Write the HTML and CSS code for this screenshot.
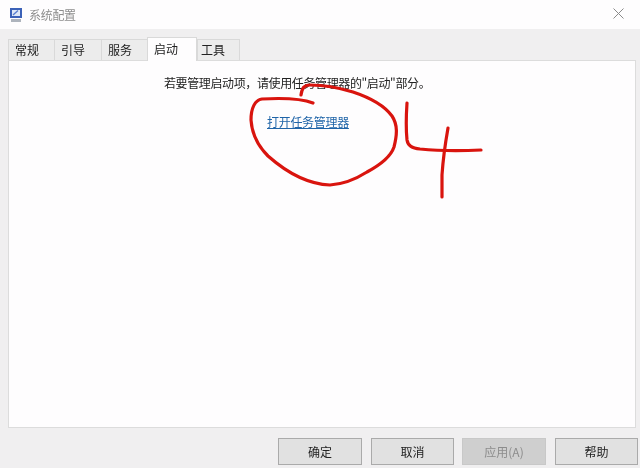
FILE: index.html
```html
<!DOCTYPE html>
<html lang="zh">
<head>
<meta charset="utf-8">
<title>系统配置</title>
<link rel="stylesheet" href="styles.css">
</head>
<body>
<div class="window">
  <header class="titlebar">
    <svg class="app-icon" width="14" height="16" viewBox="0 0 14 16">
      <rect x="1" y="1" width="12" height="10" fill="#3c62b8"/>
      <rect x="3" y="3" width="8" height="6" fill="#dfe8f6"/>
      <path d="M4 8 L9 3.5" stroke="#5a7fd0" stroke-width="1.4"/>
      <rect x="2" y="12" width="10" height="3" fill="#aeb4bd"/>
    </svg>
    <span class="title">系统配置</span>
    <svg class="close" width="11" height="11" viewBox="0 0 11 11">
      <path d="M0.5 0.5 L10.5 10.5 M10.5 0.5 L0.5 10.5" stroke="#8a8a8a" stroke-width="1"/>
    </svg>
  </header>
  <main class="content">
    <nav class="tabs">
      <span class="tab tab-a">常规</span>
      <span class="tab tab-b">引导</span>
      <span class="tab tab-c">服务</span>
      <span class="tab tab-active">启动</span>
      <span class="tab tab-e">工具</span>
    </nav>
    <section class="panel">
      <p class="message">若要管理启动项，请使用任务管理器的"启动"部分。</p>
      <a class="link" href="#">打开任务管理器</a>
    </section>
    <footer class="actions">
      <button class="btn">确定</button>
      <button class="btn btn-narrow">取消</button>
      <button class="btn btn-disabled">应用(A)</button>
      <button class="btn btn-narrow">帮助</button>
    </footer>
  </main>
  <svg class="scribble" width="640" height="468" viewBox="0 0 640 468">
    <path d="M313 103 C300 98 280 98 262 99 C255 100 251 108 251 120 C252 135 258 146 268 156 C285 171 305 184 330 185 C345 184 356 179 367 172 C380 165 391 156 394 147 C397 135 398 125 392 116 C384 105 368 97 353 92 C340 88 325 85 310 85 C304 85 302 88 301 95"/>
    <path d="M407 103 C406 118 406 130 407 140 C408 146 412 148 420 149 C440 151 460 151 481 150"/>
    <path d="M448 128 C445 145 443 160 442 175 C442 183 442 190 442 197"/>
  </svg>
</div>
</body>
</html>
```
FILE: styles.css
```css
html, body {
  margin: 0;
  padding: 0;
}
body {
  width: 640px;
  height: 468px;
  overflow: hidden;
  font-family: "Noto Sans CJK SC", "Liberation Sans", sans-serif;
  font-size: 12px;
  color: #222;
}
.window {
  position: relative;
  width: 640px;
  height: 468px;
  display: flex;
  flex-direction: column;
  background: #f0eff0;
}
.titlebar {
  height: 29px;
  flex: none;
  display: flex;
  align-items: center;
  padding: 0 16px 0 9px;
  background: #fefdfe;
  box-sizing: border-box;
}
.app-icon {
  margin-right: 6px;
}
.title {
  color: #8e8e8e;
  flex: 1;
  letter-spacing: -0.3px;
  filter: blur(0.4px);
}
.close {
  flex: none;
  margin-top: -2px;
}
.content {
  flex: 1;
  display: flex;
  flex-direction: column;
  padding: 9px 4px 3px 8px;
  min-height: 0;
}
.tabs {
  display: flex;
  align-items: flex-end;
  height: 23px;
  flex: none;
  position: relative;
  z-index: 1;
}
.tab {
  box-sizing: border-box;
  height: 21px;
  line-height: 20px;
  margin-bottom: 1px;
  background: #ececec;
  border: 1px solid #d9d9d9;
  border-bottom: none;
  border-right: none;
  padding-left: 6px;
  color: #222;
  filter: blur(0.4px);
}
.tab-a { width: 46px; }
.tab-b { width: 47px; }
.tab-c { width: 46px; }
.tab-e {
  width: 43px;
  padding-left: 3px;
  border-right: 1px solid #d9d9d9;
}
.tab-active {
  width: 50px;
  height: 24px;
  margin-bottom: 0;
  line-height: 21px;
  background: #fefdfe;
  border-right: 1px solid #d9d9d9;
}
.panel {
  flex: 1;
  min-height: 0;
  margin-top: -1px;
  background: #fefdfe;
  border: 1px solid #dcdcdc;
  display: flex;
  flex-direction: column;
  align-items: flex-start;
}
.message {
  margin: 13px 0 0 155px;
  line-height: 18px;
  letter-spacing: -0.38px;
  filter: blur(0.4px);
}
.link {
  margin: 21px 0 0 258px;
  line-height: 18px;
  letter-spacing: -0.3px;
  color: #1f64a8;
  text-decoration: underline;
  filter: blur(0.4px);
}
.actions {
  display: flex;
  justify-content: flex-end;
  gap: 8px;
  height: 27px;
  flex: none;
  margin-top: 10px;
  margin-right: -2px;
}
.btn {
  width: 84px;
  height: 27px;
  box-sizing: border-box;
  padding: 0;
  border: 1px solid #aaa;
  background: #e1e1e1;
  color: #222;
  font: inherit;
  filter: blur(0.4px);
}
.btn-narrow {
  width: 83px;
  margin-left: 1px;
}
.btn-disabled {
  border-color: #c8c8c8;
  background: #cfcfcf;
  color: #8c8c8c;
}
.scribble {
  position: absolute;
  left: 0;
  top: 0;
  pointer-events: none;
}
.scribble path {
  fill: none;
  stroke: #d9140e;
  stroke-width: 3.2;
  stroke-linecap: round;
  stroke-linejoin: round;
}
```
